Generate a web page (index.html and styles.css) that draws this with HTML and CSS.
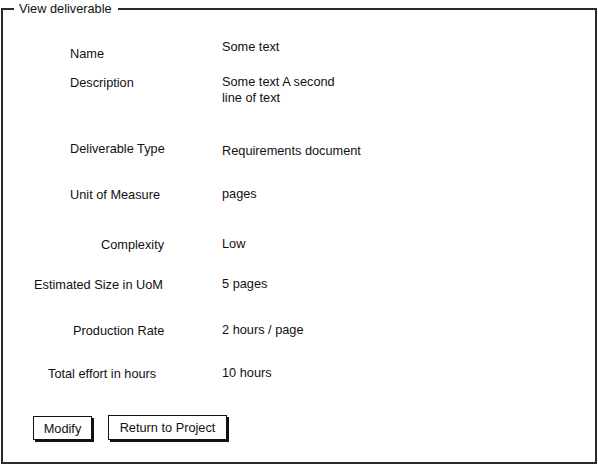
FILE: index.html
```html
<!DOCTYPE html>
<html>
<head>
<meta charset="utf-8">
<link rel="stylesheet" href="styles.css">
</head>
<body>
<div class="frame">
  <div class="legend">View deliverable</div>
  <div class="row r1"><div class="label l-name">Name</div><div class="value">Some text</div></div>
  <div class="row r2"><div class="label l-desc">Description</div><div class="value">Some text A second<br>line of text</div></div>
  <div class="row r3"><div class="label l-type">Deliverable Type</div><div class="value">Requirements document</div></div>
  <div class="row r4"><div class="label l-unit">Unit of Measure</div><div class="value">pages</div></div>
  <div class="row r5"><div class="label l-cx">Complexity</div><div class="value">Low</div></div>
  <div class="row r6"><div class="label l-est">Estimated Size in UoM</div><div class="value">5 pages</div></div>
  <div class="row r7"><div class="label l-prod">Production Rate</div><div class="value">2 hours / page</div></div>
  <div class="row r8"><div class="label l-tot">Total effort in hours</div><div class="value">10 hours</div></div>
  <div class="buttons">
    <button class="btn btn-modify">Modify</button>
    <button class="btn btn-return">Return to Project</button>
  </div>
</div>
</body>
</html>
```
FILE: styles.css
```css
html, body {
  margin: 0;
  padding: 0;
  background: #fff;
}
body {
  font-family: "Liberation Sans", Arial, sans-serif;
  font-size: 12.75px;
  color: #111;
  width: 598px;
  height: 466px;
  overflow: hidden;
}
.frame {
  position: relative;
  box-sizing: border-box;
  margin: 8px 0 0 1px;
  width: 596px;
  height: 456px;
  border: 2px solid #2a2a2a;
  padding-top: 29px;
}
.legend {
  position: absolute;
  top: -9px;
  left: 11px;
  background: #fff;
  padding: 0 6px 0 5px;
  line-height: 16px;
}
.row {
  display: flex;
  align-items: flex-start;
  line-height: 16px;
}
.label {
  width: 219px;
  box-sizing: border-box;
}
.value {
  flex: 1;
}
.r1 { height: 35px; }
.r1 .label { margin-top: 7px; }
.r2 { height: 67px; }
.r2 .label { margin-top: 1px; }
.r3 { height: 45px; }
.r3 .value { margin-top: 2px; }
.r4 { height: 50px; }
.r4 .label { margin-top: 1px; }
.r5 { height: 40px; }
.r5 .label { margin-top: 1px; }
.r6 { height: 46px; }
.r6 .label { margin-top: 1px; }
.r7 { height: 43px; }
.r7 .label { margin-top: 1px; }
.r8 { height: 50px; }
.r8 .label { margin-top: 1px; }

.l-name, .l-desc, .l-type, .l-unit { padding-left: 67px; }
.l-cx { padding-left: 98px; }
.l-est { padding-left: 31px; }
.l-prod { padding-left: 70px; }
.l-tot { padding-left: 45px; }

.buttons {
  display: flex;
  align-items: flex-start;
  padding-left: 30px;
  gap: 16px;
}
.btn {
  font-family: inherit;
  font-size: 12.75px;
  color: #111;
  background: #fff;
  border: 1.5px solid #111;
  box-shadow: 2px 2px 0 #111;
  line-height: 16px;
  padding: 3px 7px 2px 7px;
  margin: 0;
  border-radius: 0;
}
.btn-modify { width: 59px; height: 24px; margin-top: 1px; }
.btn-return { width: 119px; height: 25px; }
```
